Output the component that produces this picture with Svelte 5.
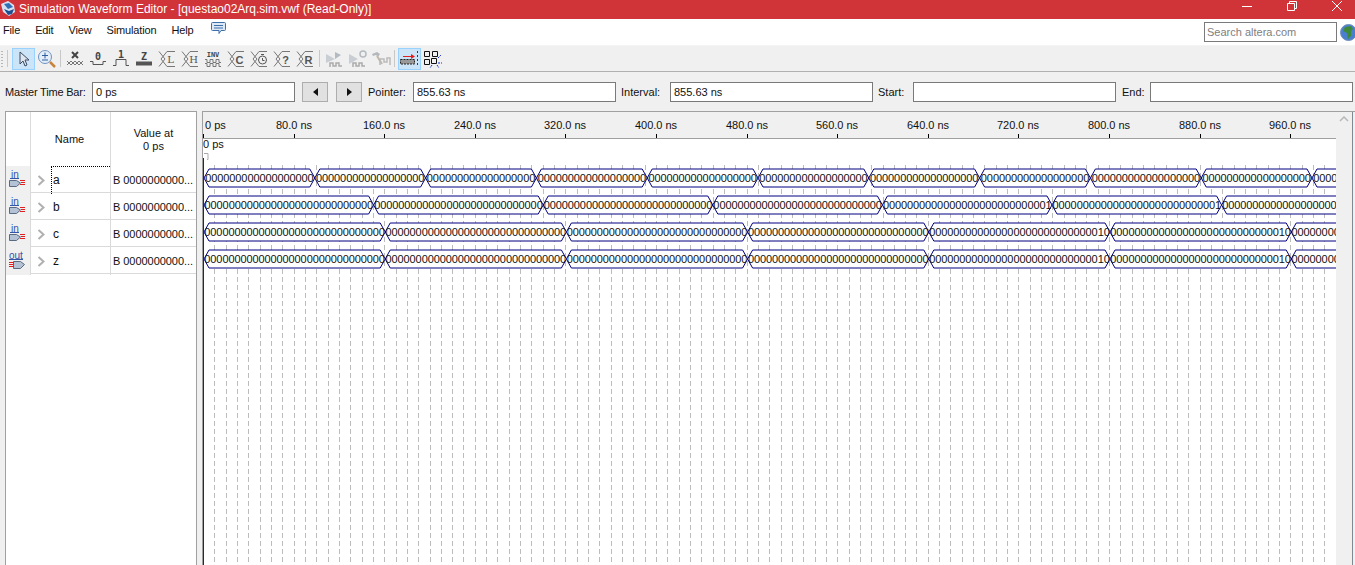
<script>
  const menus = ["File", "Edit", "View", "Simulation", "Help"];

  // forcing buttons in the toolbar
  const slantIcons = ["L", "H", "C", "clock", "?", "R"];

  const signals = [
    { name: "a", dir: "in" },
    { name: "b", dir: "in" },
    { name: "c", dir: "in" },
    { name: "z", dir: "out" }
  ];

  const panelW = 1133;
  const tick = 90.6;
  const t0 = 1;

  const rows = [
    { y: 31, period: 110.8, ones: [], oneAt: 0 },
    { y: 58, period: 169.6, ones: [4, 5], oneAt: 2 },
    { y: 85, period: 181.2, ones: [4, 5], oneAt: 3 },
    { y: 112, period: 181.2, ones: [4, 5], oneAt: 3 }
  ];

  function segments(row) {
    const out = [];
    for (let i = 0; t0 + i * row.period < panelW; i++) {
      const x0 = t0 + i * row.period;
      const x1 = x0 + row.period;
      out.push({ x0, x1, digits: digits(x1 - x0, row.ones.includes(i) ? row.oneAt : 0) });
    }
    return out;
  }

  function digits(w, oneAt) {
    const n = Math.ceil(w / 5.9) + 1;
    let s = "0".repeat(n);
    if (oneAt) s = s.slice(0, n - oneAt) + "1" + s.slice(n - oneAt + 1);
    return s;
  }

  function hex(x0, x1, y) {
    const top = y + 1;
    const bot = y + 19;
    const mid = y + 10;
    return `${x0},${mid} ${x0 + 5},${top} ${x1 - 5},${top} ${x1},${mid} ${x1 - 5},${bot} ${x0 + 5},${bot}`;
  }

  const labels = Array.from({ length: 13 }, (_, i) => ({
    x: Math.round(i * tick),
    text: i === 0 ? "0 ps" : (i * 80).toFixed(1) + " ns"
  }));

  const gridLines = Array.from({ length: 99 }, (_, i) => Math.round((i + 1) * (tick / 8)) + 0.5);
</script>

<div class="window">
  <header class="titlebar">
    <svg class="app-icon" width="15" height="17" viewBox="0 0 15 17">
      <path d="M0 3 L7 0 L13 4 L14 11 L8 15 L2 11 Z" fill="#d5e2f2" />
      <path d="M3 3 L8 2 L12 6 L7 8 Z" fill="#2f6fb5" />
      <path d="M3 8 L8 10 L13 8 L11 13 L7 14 Z" fill="#1f4f8f" />
    </svg>
    <span class="title">Simulation Waveform Editor - [questao02Arq.sim.vwf (Read-Only)]</span>
    <div class="winctl">
      <svg width="10" height="10" viewBox="0 0 10 10"><path d="M0 5.500H10" stroke="#fff" fill="none" /></svg>
      <svg width="10" height="10" viewBox="0 0 10 10"><path d="M.5 2.500h7v7h-7zM2.500 2.500v-2h7v7h-2" stroke="#fff" fill="none" /></svg>
      <svg width="10" height="10" viewBox="0 0 10 10"><path d="M0 0L10 10M10 0L0 10" stroke="#fff" fill="none" /></svg>
    </div>
  </header>

  <nav class="menubar">
    {#each menus as m}
      <span class="menu">{m}</span>
    {/each}
    <svg class="chat" width="15" height="14" viewBox="0 0 15 14">
      <path d="M1.500 .5h12a1 1 0 0 1 1 1v6a1 1 0 0 1-1 1H10l-2 3V8.500H1.500a1 1 0 0 1-1-1v-6a1 1 0 0 1 1-1z" fill="#dce8f5" stroke="#3f6fa8" />
      <path d="M3 3.500h9M3 6h9" stroke="#3f6fa8" />
    </svg>
    <div class="search">Search altera.com</div>
    <svg class="globe" width="17" height="17" viewBox="0 0 17 17">
      <circle cx="8.500" cy="8.500" r="8" fill="#4a7fd0" stroke="#6f8fb8" />
      <path d="M5 3l6-1 2 3-2 2 0 5-3 3-1-6-4-2z" fill="#3f8a3a" />
    </svg>
  </nav>

  <div class="toolbar">
    <span class="grip"></span>
    <span class="sep"></span>
    <button class="tool on">
      <svg width="16" height="18" viewBox="0 0 16 18">
        <path d="M4 2v12l3-3 2 5 2-1-2-5h4z" fill="#dfe6f0" stroke="#3c4a60" />
      </svg>
    </button>
    <button class="tool">
      <svg width="20" height="20" viewBox="0 0 20 20">
        <circle cx="8" cy="8" r="6.500" fill="#e4eefa" stroke="#6f93c4" />
        <path d="M5 6.500h6M8 3.500v6M5 11h6" stroke="#2f5fa0" />
        <path d="M13 13l5 5" stroke="#c8843c" stroke-width="2.500" />
      </svg>
    </button>
    <span class="sep"></span>
    <button class="tool">
      <svg width="18" height="18" viewBox="0 0 18 18">
        <path d="M6 2l6 6M12 2l-6 6" stroke="#444" stroke-width="2" />
        <path d="M1 11l2 2 2-2 2 2 2-2 2 2 2-2 2 2 2-2M1 15l2-2 2 2 2-2 2 2 2-2 2 2 2-2 2 2" stroke="#777" fill="none" />
      </svg>
    </button>
    <button class="tool">
      <svg width="18" height="18" viewBox="0 0 18 18">
        <path d="M1 11.500h3v3h10v-3h3" stroke="#555" fill="none" />
        <text x="9" y="10" class="glyph">0</text>
      </svg>
    </button>
    <button class="tool">
      <svg width="18" height="18" viewBox="0 0 18 18">
        <path d="M1 15.500h3v-6h10v6h3" stroke="#555" fill="none" />
        <text x="9" y="8" class="glyph">1</text>
      </svg>
    </button>
    <button class="tool">
      <svg width="18" height="18" viewBox="0 0 18 18">
        <rect x="1" y="11.500" width="16" height="4" fill="#555" />
        <text x="9" y="10" class="glyph">Z</text>
      </svg>
    </button>
    {#each slantIcons.slice(0, 2) as s}
      <button class="tool">
        <svg width="18" height="18" viewBox="0 0 18 18">
          <path d="M1 1.500l6 7.500-6 7.500M9 1.500l-6 7.500M3 9l6 7.500M9 1.500h8M9 16.500h8" stroke="#777" fill="none" />
          <text x="12.500" y="13" class="slant">{s}</text>
        </svg>
      </button>
    {/each}
    <button class="tool">
      <svg width="18" height="18" viewBox="0 0 18 18">
        <text x="9" y="7" class="inv">INV</text>
        <path d="M1 9.500h2v3h3v-3h3v3h3v-3h3v3h2M1 13.500h2v3h3v-3h3v3h3v-3h3v3h2" stroke="#777" fill="none" />
      </svg>
    </button>
    {#each slantIcons.slice(2) as s}
      <button class="tool">
        <svg width="18" height="18" viewBox="0 0 18 18">
          <path d="M1 1.500l6 7.500-6 7.500M9 1.500l-6 7.500M3 9l6 7.500M9 1.500h8M9 16.500h8" stroke="#777" fill="none" />
          {#if s === "clock"}
            <circle cx="12.500" cy="10" r="4" fill="none" stroke="#555" />
            <path d="M12.500 8v2.500h2M11 4.500h3" stroke="#555" fill="none" />
          {:else}
            <text x="12.500" y="13.500" class="slant bold">{s}</text>
          {/if}
        </svg>
      </button>
    {/each}
    <span class="sep wide"></span>
    <button class="tool">
      <svg width="20" height="18" viewBox="0 0 20 18">
        <path d="M1 4v9l9-4z" fill="#c9ced4" />
        <path d="M10 2l6 3-6 4z" fill="#b4bac1" />
        <path d="M5 17v-4h3v3h3v-3h3v3h3" stroke="#aaa" fill="none" stroke-width="1.500" />
      </svg>
    </button>
    <button class="tool">
      <svg width="20" height="18" viewBox="0 0 20 18">
        <path d="M1 4v10l9-5z" fill="#c9ced4" />
        <circle cx="15" cy="4" r="3" fill="none" stroke="#b4bac1" stroke-width="1.500" />
        <path d="M5 17v-4h3v3h3v-3h3v3h3" stroke="#aaa" fill="none" stroke-width="1.500" />
      </svg>
    </button>
    <button class="tool">
      <svg width="20" height="18" viewBox="0 0 20 18">
        <path d="M1 4l5-2 3 2-2 3-2-2-3 1z" fill="#b4b8bd" />
        <path d="M6 6l5 8" stroke="#c2b9ac" stroke-width="2" />
        <path d="M9 15V9h4v3h3V8h3v7" stroke="#bbb" fill="none" stroke-width="1.500" />
      </svg>
    </button>
    <span class="sep after"></span>
    <button class="tool on">
      <svg width="20" height="18" viewBox="0 0 20 18">
        <path d="M3 6.500h10" stroke="#e02020" />
        <path d="M11 4l4 2.500-4 2.500z" fill="#e02020" />
        <rect x=".5" y="9.500" width="14" height="4.500" fill="#999" stroke="#222" stroke-dasharray="2 1" />
        <path d="M17.500 1v16" stroke="#1030e0" stroke-dasharray="2 2" />
      </svg>
    </button>
    <button class="tool">
      <svg width="20" height="18" viewBox="0 0 20 18">
        <path d="M1.500 1.500h5v5h-5zM9.500 1.500h5v5h-5zM1.500 9.500h5v5h-5zM8.500 8.500h5v5h-5z" fill="none" stroke="#111" />
        <path d="M15 8l3-3M15 13h4M14 15l2 3M9 15l-2 3" stroke="#1030e0" stroke-dasharray="2 1" />
      </svg>
    </button>
  </div>

  <div class="timebar">
    <label class="f1">Master Time Bar:</label>
    <div class="field">0 ps</div>
    <button class="step"><span class="tri left"></span></button>
    <button class="step"><span class="tri right"></span></button>
    <label class="f2">Pointer:</label>
    <div class="field">855.63 ns</div>
    <label class="f3">Interval:</label>
    <div class="field">855.63 ns</div>
    <label class="f4">Start:</label>
    <div class="field"></div>
    <label class="f5">End:</label>
    <div class="field"></div>
  </div>

  <div class="main">
    <section class="nodes">
      <div class="head">
        <div class="hc-icon"></div>
        <div class="hc-name">Name</div>
        <div class="hc-value">Value at<br />0 ps</div>
      </div>
      {#each signals as s, i}
        <div class="row">
          <div class="pin">
            <svg width="18" height="20" viewBox="0 -2 18 20">
              <text x={s.dir === "in" ? 2 : 0} y="5.500" class="pin-label">{s.dir}</text>
              <path d={s.dir === "in" ? "M1 6.500h9" : "M0 6.500h14"} stroke="#3355aa" fill="none" />
              {#if s.dir === "in"}
                <path d="M.5 8.500h7l4 2.500-4 3.500h-7z" fill="#b4c2d6" stroke="#5a6a80" />
                <path d="M11 8.500h5M12 10.500h4M11 12.500h5" stroke="#e02020" />
              {:else}
                <path d="M4.500 8.500h7l4 3-4 4h-7z" fill="#b4c2d6" stroke="#5a6a80" />
                <path d="M0 9.500h5M0 11.500h5M0 13.500h5" stroke="#e02020" />
              {/if}
            </svg>
          </div>
          <div class="namecell">
            <svg width="8" height="11" viewBox="0 0 8 11"><path d="M1.500 1l5 4.500-5 4.500" stroke="#b0b0b0" stroke-width="2" fill="none" /></svg>
            <span class="signame" class:focus={i === 0}>{s.name}</span>
          </div>
          <div class="valuecell">B 0000000000...</div>
        </div>
      {/each}
    </section>

    <section class="wave">
      <svg width={panelW} height="454" viewBox="0 0 {panelW} 454">
        <rect x="0" y="0" width={panelW} height="26" fill="#f0f0f0" />
        <path d="M0 26.500H{panelW}" stroke="#a0a0a0" />
        {#each labels as l, i}
          <text x={i === 0 ? 2 : l.x} y="17" class="tl" text-anchor={i === 0 ? "start" : "middle"}>{l.text}</text>
          <path d="M{l.x + 0.5} 22v4" stroke="#000" />
        {/each}
        <text x="0" y="36" class="tl">0 ps</text>

        {#each gridLines as x}
          <path d="M{x} 53V454" stroke="#bcbcbc" stroke-dasharray="5 3" />
        {/each}

        {#each rows as r}
          {#each segments(r) as seg}
            <polygon points={hex(seg.x0, seg.x1, r.y + 25)} fill="#fff" stroke="#000080" />
          {/each}
          {#each segments(r) as seg}
            <svg x={seg.x0 + 1} y={r.y + 25} width={seg.x1 - seg.x0 - 2} height="20">
              <text x={(seg.x1 - seg.x0 - 2) / 2} y="14" class="bits" text-anchor="middle">{seg.digits}</text>
            </svg>
          {/each}
        {/each}

        <path d="M1 41.500h4v6h-1" fill="none" stroke="#aaa" />
        <rect x="0" y="46" width="1" height="408" fill="#1414d2" />
      </svg>
      <div class="vscroll">
        <svg width="10" height="6" viewBox="0 0 10 6"><path d="M1 5l4-4 4 4" stroke="#b8b8b8" stroke-width="1.500" fill="none" /></svg>
      </div>
    </section>
  </div>
</div>

<style>
  :global(body) {
    margin: 0;
    background: #f0f0f0;
    overflow: hidden;
  }
  .window {
    width: 1355px;
    height: 565px;
    display: flex;
    flex-direction: column;
    font-family: "Liberation Sans", Arial, sans-serif;
    font-size: 11px;
    color: #111;
    overflow: hidden;
  }
  .titlebar {
    height: 19px;
    background: #d13438;
    display: flex;
    align-items: center;
    color: #fff;
    flex: none;
  }
  .app-icon {
    margin: 0 3px 0 1px;
  }
  .title {
    font-size: 12px;
    flex: 1;
    padding-bottom: 2px;
  }
  .winctl {
    display: flex;
    gap: 35px;
    padding: 0 13px 7px 0;
  }
  .menubar {
    height: 26px;
    background: #fff;
    border-bottom: 1px solid #f4f4f4;
    display: flex;
    align-items: center;
    flex: none;
    padding-left: 3px;
  }
  .menu {
    margin: 0 15px 4px 0;
    letter-spacing: -0.15px;
  }
  .chat {
    margin: 0 0 7px 3px;
  }
  .search {
    margin-left: auto;
    width: 129px;
    height: 18px;
    line-height: 18px;
    border: 1px solid #7a7a7a;
    padding-left: 2px;
    color: #808080;
  }
  .globe {
    margin: 0 -2px 0 3px;
    flex: none;
  }
  .toolbar {
    height: 25px;
    border-bottom: 1px solid #b0b0b0;
    display: flex;
    align-items: center;
    flex: none;
  }
  .grip {
    width: 2px;
    height: 16px;
    margin-left: 1px;
    background: repeating-linear-gradient(#b8b8b8 0 1px, transparent 1px 3px);
  }
  .sep {
    width: 1px;
    height: 17px;
    background: #c8c8c8;
    margin: 0 2px;
  }
  .grip + .sep {
    margin: 0 4px;
  }
  .sep.wide {
    margin: 0 3px;
  }
  .sep.after {
    margin: 0 3px 0 2px;
  }
  .tool {
    width: 23px;
    height: 22px;
    padding: 0;
    background: none;
    border: 1px solid transparent;
    display: flex;
    align-items: center;
    justify-content: center;
  }
  .tool.on {
    background: #cce4f7;
    border-color: #99d1ff;
  }
  .glyph {
    font: bold 10px "DejaVu Sans Mono", monospace;
    text-anchor: middle;
    fill: #444;
  }
  .slant {
    font: 10px "DejaVu Serif", serif;
    text-anchor: middle;
    fill: #555;
  }
  .slant.bold {
    font: bold 11px "Liberation Sans", sans-serif;
  }
  .inv {
    font: bold 7px "DejaVu Sans Mono", monospace;
    text-anchor: middle;
    fill: #444;
  }
  .timebar {
    height: 39px;
    display: flex;
    align-items: center;
    flex: none;
    padding-left: 5px;
  }
  .field {
    height: 18px;
    line-height: 18px;
    width: 198px;
    padding-left: 3px;
    border: 1px solid #7a7a7a;
    background: #fff;
    flex: none;
  }
  .f1 { width: 87px; letter-spacing: -0.2px; }
  .f2 { width: 45px; margin-left: 6px; }
  .f3 { width: 49px; margin-left: 5px; }
  .f4 { width: 35px; margin-left: 5px; }
  .f5 { width: 28px; margin-left: 6px; }
  .step {
    width: 26px;
    height: 20px;
    padding: 0;
    margin-left: 7px;
    background: #e1e1e1;
    border: 1px solid #adadad;
    display: flex;
    align-items: center;
    justify-content: center;
  }
  .step + .step {
    margin-left: 8px;
  }
  .step + label {
    margin-left: 6px;
  }
  .tri {
    width: 0;
    height: 0;
    border-top: 4px solid transparent;
    border-bottom: 4px solid transparent;
  }
  .tri.left {
    border-right: 5px solid #111;
  }
  .tri.right {
    border-left: 5px solid #111;
  }
  .main {
    flex: 1;
    display: flex;
    align-items: stretch;
    padding-left: 5px;
    min-height: 0;
  }
  .nodes {
    width: 190px;
    background: #fff;
    border: 1px solid #a0a0a0;
    border-bottom: none;
    flex: none;
  }
  .head {
    height: 54px;
    display: grid;
    grid-template-columns: 25px 80px 1fr;
  }
  .hc-icon {
    border-right: 1px solid #dadada;
  }
  .hc-name {
    padding: 21px 2px 0 0;
    text-align: center;
    border-right: 1px solid #dadada;
  }
  .hc-value {
    padding-top: 15px;
    text-align: center;
    line-height: 13px;
  }
  .row {
    height: 26px;
    border-bottom: 1px solid #dadada;
    display: grid;
    grid-template-columns: 25px 80px 1fr;
  }
  .pin {
    background: #f0f0f0;
    border-right: 1px solid #dadada;
    display: flex;
    align-items: center;
    justify-content: center;
  }
  .pin-label {
    font: 10px "Liberation Sans", sans-serif;
    fill: #3355aa;
  }
  .namecell {
    border-right: 1px solid #dadada;
    display: flex;
    align-items: center;
    padding-left: 6px;
    gap: 6px;
    font-size: 12px;
  }
  .signame {
    align-self: stretch;
    flex: 1;
    line-height: 28px;
    padding-left: 2px;
  }
  .signame.focus {
    border-top: 1px dotted #000;
    border-left: 1px dotted #000;
    padding-left: 1px;
    line-height: 27px;
  }
  .valuecell {
    line-height: 28px;
    padding-left: 2px;
    white-space: nowrap;
    letter-spacing: -0.05px;
  }
  .wave {
    margin-left: 5px;
    flex: 1;
    display: flex;
    border-top: 1px solid #a0a0a0;
    border-left: 1px solid #a0a0a0;
    min-width: 0;
  }
  .wave > svg {
    flex: none;
    background: #fff;
  }
  .vscroll {
    width: 16px;
    background: #f0f0f0;
    border-right: 1px solid #808a90;
    text-align: center;
    padding-top: 4px;
    flex: none;
  }
  .vscroll svg {
    display: block;
    margin: 0 auto;
  }
  .tl {
    font: 11px "Liberation Sans", sans-serif;
    fill: #111;
  }
  .bits {
    font: 11px "Liberation Sans", sans-serif;
    fill: #111;
    letter-spacing: -0.1px;
  }
</style>
